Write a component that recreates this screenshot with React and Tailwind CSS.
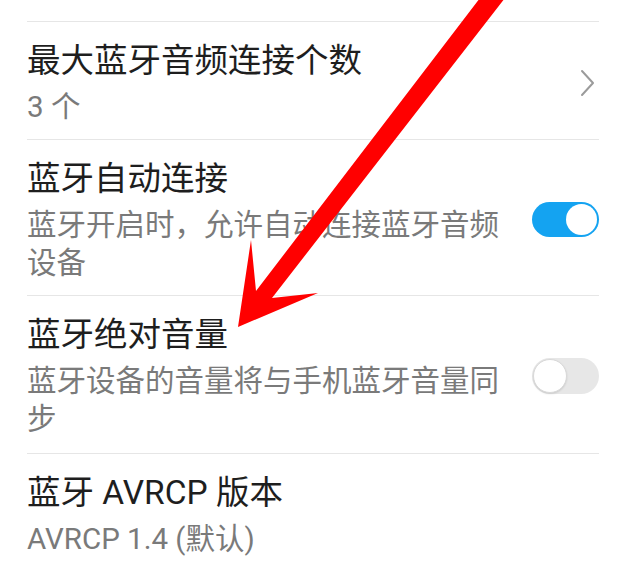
import React from "react";

const FONT = {
  fontFamily: 'Roboto, "Noto Sans CJK SC", "Noto Sans", sans-serif',
};

function Chevron() {
  return (
    <svg width="16" height="28" viewBox="0 0 16 28" className="mr-[3px]">
      <polyline
        points="2,2 13,14 2,26"
        fill="none"
        stroke="#9b9b9b"
        strokeWidth="2"
        strokeLinecap="round"
        strokeLinejoin="round"
      />
    </svg>
  );
}

function Toggle({ on }) {
  if (on) {
    return (
      <div className="flex h-[35px] w-[67px] items-center justify-end rounded-full bg-[#14a3f1] p-[2px]">
        <div className="h-[31px] w-[31px] rounded-full bg-white" />
      </div>
    );
  }
  return (
    <div className="flex h-[36px] w-[67px] items-center justify-start rounded-full bg-[#e7e7e7] p-[1px]">
      <div className="h-[34px] w-[34px] rounded-full border border-[#d9d9d9] bg-white shadow-[0_1px_2px_rgba(0,0,0,0.12)]" />
    </div>
  );
}

function Row({ title, lines, right, last }) {
  return (
    <div
      className={
        "ml-[27px] mr-[31px] flex items-center border-t border-[#e6e6e6] pt-[17px] " +
        (last ? "pb-[15px]" : "pb-[13px]")
      }
    >
      <div className="w-[480px]">
        <div className="text-[33.5px] leading-[44px] text-[#1e1e1e]">{title}</div>
        <div className="mt-[5px] text-[29.5px] leading-[38px] text-[#7a7a7a]">{lines}</div>
      </div>
      <div className="ml-auto flex items-center">{right}</div>
    </div>
  );
}

export default function App() {
  return (
    <div className="relative h-[567px] w-[630px] overflow-hidden bg-white" style={FONT}>
      <div className="h-[21px]" />
      <Row title="最大蓝牙音频连接个数" lines="3 个" right={<Chevron />} />
      <Row
        title="蓝牙自动连接"
        lines="蓝牙开启时，允许自动连接蓝牙音频设备"
        right={<Toggle on />}
      />
      <Row
        title="蓝牙绝对音量"
        lines="蓝牙设备的音量将与手机蓝牙音量同步"
        right={<Toggle on={false} />}
        last
      />
      <Row title="蓝牙 AVRCP 版本" lines="AVRCP 1.4 (默认)" right={null} />

      {/* red pointer arrow drawn over the list */}
      <svg
        className="pointer-events-none absolute left-0 top-0"
        width="630"
        height="567"
        viewBox="0 0 630 567"
      >
        <polygon
          points="480,-2 505,-2 272,298 318,293 238,327 251,240 256,291"
          fill="#ff0000"
        />
      </svg>
    </div>
  );
}
